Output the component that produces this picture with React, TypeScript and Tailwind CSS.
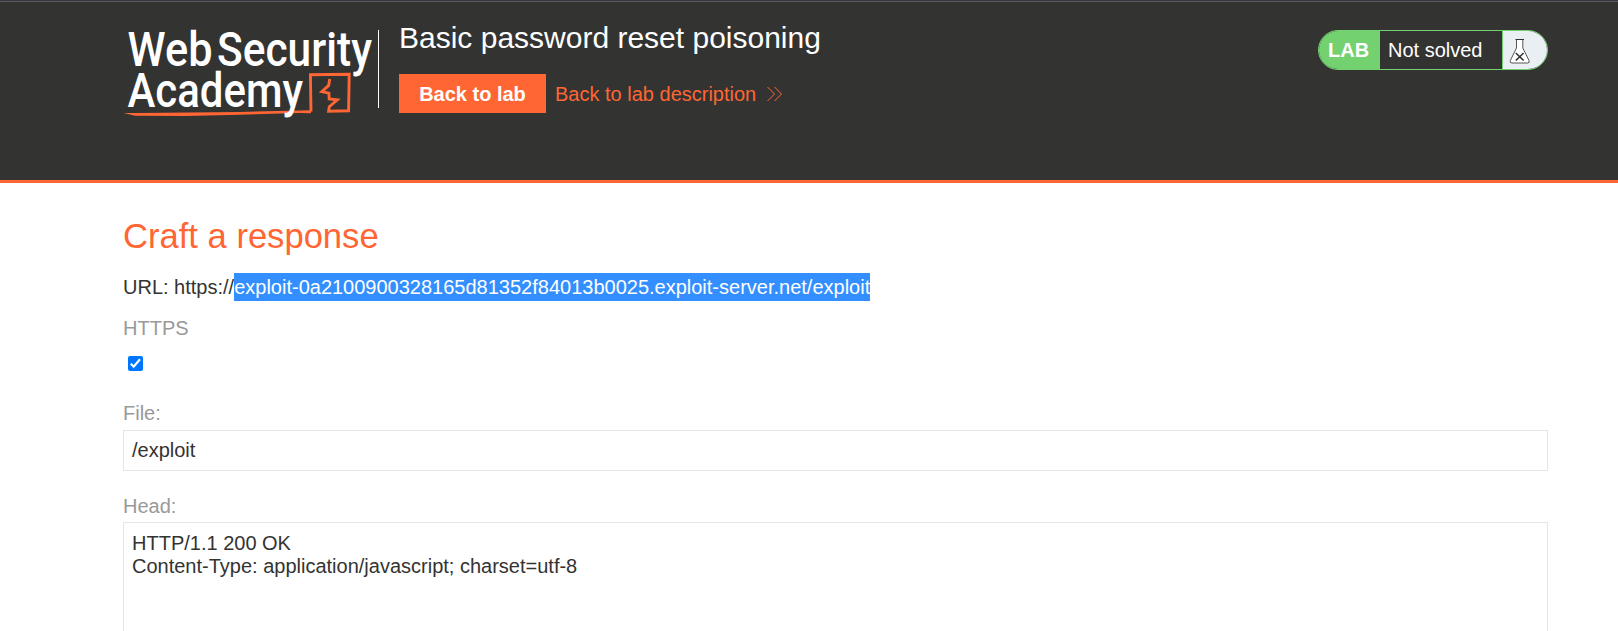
import React from "react";

function Logo() {
  return (
    <svg width="250" height="108" viewBox="123 17 250 108" className="block shrink-0 overflow-visible" fill="none">
      <path d="M123.5 113.1 L138 113.1 L240 111.9 L311 110.2 V113.3 L300 112.9 L240 114.8 L185 115.9 L135 115.7 Z" fill="#ff6633" />
      <path d="M311 111.6 L310.4 74.8 L349.2 74.2 L348.6 110.8 L328.6 111.2 L329.3 106.7 L337.3 99.9 L329.2 99 L328.9 93.2 L321.8 91.7 L328.7 85.4 L329.7 79" stroke="#ff6633" strokeWidth="2.9" />
      <g fill="#fff" fontFamily="Roboto, sans-serif" fontSize="47.5" fontWeight="500">
        <text x="127.5" y="66" textLength="85" lengthAdjust="spacingAndGlyphs">Web</text>
        <text x="217" y="66" textLength="155" lengthAdjust="spacingAndGlyphs">Security</text>
        <text x="127.5" y="107" textLength="175.5" lengthAdjust="spacingAndGlyphs">Academy</text>
      </g>
    </svg>
  );
}

function Flask() {
  return (
    <svg width="22" height="27" viewBox="0 0 22 27" fill="none">
      <path d="M7.5 1.5 V10 L1.3 22.5 Q0.5 25 3 25 H18.5 Q21 25 20 22.5 L13.8 10 V1.5" fill="#fff" stroke="#555" />
      <path d="M6.5 1.5 H15" stroke="#333" strokeWidth="1.2" />
      <path d="M6.8 15 L14.6 22.5 M14.6 15 L6.8 22.5" stroke="#333" strokeWidth="1.6" />
    </svg>
  );
}

export default function App() {
  return (
    <div className="h-[631px] overflow-hidden bg-white font-['Liberation_Sans',Arial,sans-serif] text-[20px] leading-[23px] text-[#333332]">
      <header className="h-[183px] border-b-[3px] border-[#ff6633] bg-[#333332]">
        <div className="h-0.5 border-b border-[#5a5a60] bg-[#35363a]" />
        <div className="ml-[123px] flex w-[1425px] items-start pt-[15px]">
          <Logo />
          <div className="mt-[13px] h-[78px] w-[6px] shrink-0 border-r border-white" />
          <div className="ml-5 grow">
            <h2 className="mt-[4px] text-[30px] leading-[34px] text-white">Basic password reset poisoning</h2>
            <div className="mt-[19px] flex items-center">
              <button className="h-[39px] w-[147px] bg-[#ff6633] pt-0.5 font-bold text-white">Back to lab</button>
              <a className="ml-[9px] pt-0.5 text-[#ff6633]">Back to lab description</a>
              <svg width="16" height="16" viewBox="0 0 16 16" className="ml-[11px]" fill="none" stroke="#ff6633">
                <path d="M0.5 1 L7.5 8 L0.5 15 M7.5 1 L14.5 8 L7.5 15" />
              </svg>
            </div>
          </div>
          <div className="mt-[13px] flex h-10 w-[230px] overflow-hidden rounded-[20px] border border-[#73d16f] text-white">
            <div className="flex w-[61px] items-center bg-[#73d16f] pl-[9px] pt-px font-bold">LAB</div>
            <div className="flex w-[123px] items-center border-r border-[#73d16f] pl-2">Not solved</div>
            <div className="flex grow items-center bg-[#eaeff3] pl-[6px] pt-0.5"><Flask /></div>
          </div>
        </div>
      </header>
      <main className="ml-[123px] w-[1425px] pt-[33px]">
        <h1 className="text-[34.6px] leading-[40px] text-[#ff6633]">Craft a response</h1>
        <p className="mt-[17px] flex h-7 items-center">
          <span>URL: https://</span>
          <span className="bg-[#338fff] leading-[28px] text-white">exploit-0a2100900328165d81352f84013b0025.exploit-server.net/exploit</span>
        </p>
        <label className="mt-[16px] block text-[#999999]">HTTPS</label>
        <div className="mt-[16px] ml-[5px] flex size-[15px] items-center justify-center rounded-[2px] bg-[#0075ff]">
          <svg width="15" height="15" viewBox="0 0 15 15" fill="none" stroke="#fff" strokeWidth="2.2">
            <path d="M2.8 7.8 L5.7 10.7 L12 3.3" />
          </svg>
        </div>
        <label className="mt-[31px] block text-[#999999]">File:</label>
        <div className="mt-[5px] flex h-[41px] items-center border border-[#e5e5e5] pl-2">/exploit</div>
        <label className="mt-6 block text-[#999999]">Head:</label>
        <div className="mt-1 h-[200px] border border-[#e5e5e5] pt-[9px] pl-2">
          <div>HTTP/1.1 200 OK</div>
          <div>Content-Type: application/javascript; charset=utf-8</div>
        </div>
      </main>
    </div>
  );
}
